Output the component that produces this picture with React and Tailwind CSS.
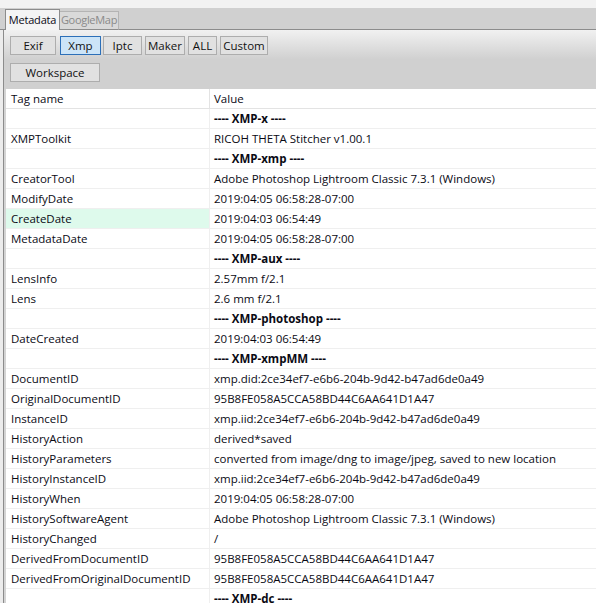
import React from "react";

const rows = [
  { section: "XMP-x" },
  { tag: "XMPToolkit", value: "RICOH THETA Stitcher v1.00.1" },
  { section: "XMP-xmp" },
  { tag: "CreatorTool", value: "Adobe Photoshop Lightroom Classic 7.3.1 (Windows)" },
  { tag: "ModifyDate", value: "2019:04:05 06:58:28-07:00" },
  { tag: "CreateDate", value: "2019:04:03 06:54:49", selected: true },
  { tag: "MetadataDate", value: "2019:04:05 06:58:28-07:00" },
  { section: "XMP-aux" },
  { tag: "LensInfo", value: "2.57mm f/2.1" },
  { tag: "Lens", value: "2.6 mm f/2.1" },
  { section: "XMP-photoshop" },
  { tag: "DateCreated", value: "2019:04:03 06:54:49" },
  { section: "XMP-xmpMM" },
  { tag: "DocumentID", value: "xmp.did:2ce34ef7-e6b6-204b-9d42-b47ad6de0a49" },
  { tag: "OriginalDocumentID", value: "95B8FE058A5CCA58BD44C6AA641D1A47" },
  { tag: "InstanceID", value: "xmp.iid:2ce34ef7-e6b6-204b-9d42-b47ad6de0a49" },
  { tag: "HistoryAction", value: "derived*saved" },
  { tag: "HistoryParameters", value: "converted from image/dng to image/jpeg, saved to new location" },
  { tag: "HistoryInstanceID", value: "xmp.iid:2ce34ef7-e6b6-204b-9d42-b47ad6de0a49" },
  { tag: "HistoryWhen", value: "2019:04:05 06:58:28-07:00" },
  { tag: "HistorySoftwareAgent", value: "Adobe Photoshop Lightroom Classic 7.3.1 (Windows)" },
  { tag: "HistoryChanged", value: "/" },
  { tag: "DerivedFromDocumentID", value: "95B8FE058A5CCA58BD44C6AA641D1A47" },
  { tag: "DerivedFromOriginalDocumentID", value: "95B8FE058A5CCA58BD44C6AA641D1A47" },
  { section: "XMP-dc" },
];

const buttons = [
  { label: "Exif", cls: "w-[46px]" },
  { label: "Xmp", cls: "w-[41px] ml-[4px]", active: true },
  { label: "Iptc", cls: "w-[39px] ml-[2px]" },
  { label: "Maker", cls: "w-[40px] ml-[3px]" },
  { label: "ALL", cls: "w-[29px] ml-[3px]" },
  { label: "Custom", cls: "w-[48px] ml-[3px]" },
];

const ToolButton = ({ label, cls, active }) => (
  <button
    className={
      "h-[19px] flex items-center justify-center border text-[11.5px] leading-none text-[#111] " +
      cls +
      (active ? " bg-[#cce4f7] border-[#2c6fb8]" : " bg-[#e1e1e1] border-[#adadad]")
    }
  >
    {label}
  </button>
);

const App = () => {
  return (
    <div className="w-[596px] h-[603px] overflow-hidden bg-[#f0f0f0] text-[#0a0a14] font-['Open_Sans',sans-serif] flex flex-col">
      {/* top strip */}
      <div className="h-[8px] shrink-0 bg-[#f2f2f2]" />

      {/* tab bar */}
      <div className="h-[22px] shrink-0 flex items-end bg-[#d0d0d0]">
        <div className="w-[5px] h-full border-b border-[#8c8c8c]" />
        <div className="w-[55px] h-[21px] bg-[#f4f4f4] border-t border-l border-r border-[#8c8c8c] text-[11px] tracking-[-0.2px] flex items-center justify-center whitespace-nowrap">
          Metadata
        </div>
        <div className="w-[59px] h-[19px] bg-[#d9d9d9] border-t border-r border-[#b4b4b4] border-b-[#8c8c8c] border-b text-[11px] tracking-[-0.3px] text-[#8a8a8a] flex items-center justify-center whitespace-nowrap">
          GoogleMap
        </div>
        <div className="flex-1 h-full border-b border-[#8c8c8c]" />
      </div>

      <div className="flex-1 flex min-h-0">
        {/* left frame */}
        <div className="w-[3px] shrink-0 bg-[#ececec]" />
        <div className="w-[1px] shrink-0 bg-[#8c8c8c]" />

        <div className="flex-1 flex flex-col min-w-0">
          {/* toolbar panel */}
          <div className="h-[59px] shrink-0 bg-linear-to-b from-[#f1f1f1] via-[#d0d0d0] via-50% to-[#d0d0d0] pl-[6px] pt-[6px] flex flex-col gap-[8px]">
            <div className="flex">
              {buttons.map((b) => (
                <ToolButton key={b.label} {...b} />
              ))}
            </div>
            <div className="flex">
              <ToolButton label="Workspace" cls="w-[90px]" />
            </div>
          </div>

          {/* table */}
          <div className="flex-1 flex min-h-0 bg-[#d4d4d4] pl-[2px]">
            <div className="flex-1 bg-white text-[11.5px]">
              <div className="flex h-[20px] border-b border-[#e3e3e3]">
                <div className="w-[204px] border-r border-[#e3e3e3] pl-[5px] pt-[1px] flex items-center">Tag name</div>
                <div className="flex-1 pl-[4px] pt-[1px] flex items-center">Value</div>
              </div>
              {rows.map((r, i) => (
                <div key={i} className="flex h-[20px] border-b border-[#efefef]">
                  <div
                    className={
                      "w-[204px] border-r border-[#efefef] pl-[5px] pt-[1px] flex items-center whitespace-nowrap" +
                      (r.selected ? " bg-[#defaec]" : "")
                    }
                  >
                    {r.tag}
                  </div>
                  <div className={"flex-1 pl-[4px] pt-[1px] flex items-center whitespace-nowrap" + (r.section ? " font-bold" : "")}>
                    {r.section ? `---- ${r.section} ----` : r.value}
                  </div>
                </div>
              ))}
            </div>
          </div>
        </div>
      </div>
    </div>
  );
};

export default App;
